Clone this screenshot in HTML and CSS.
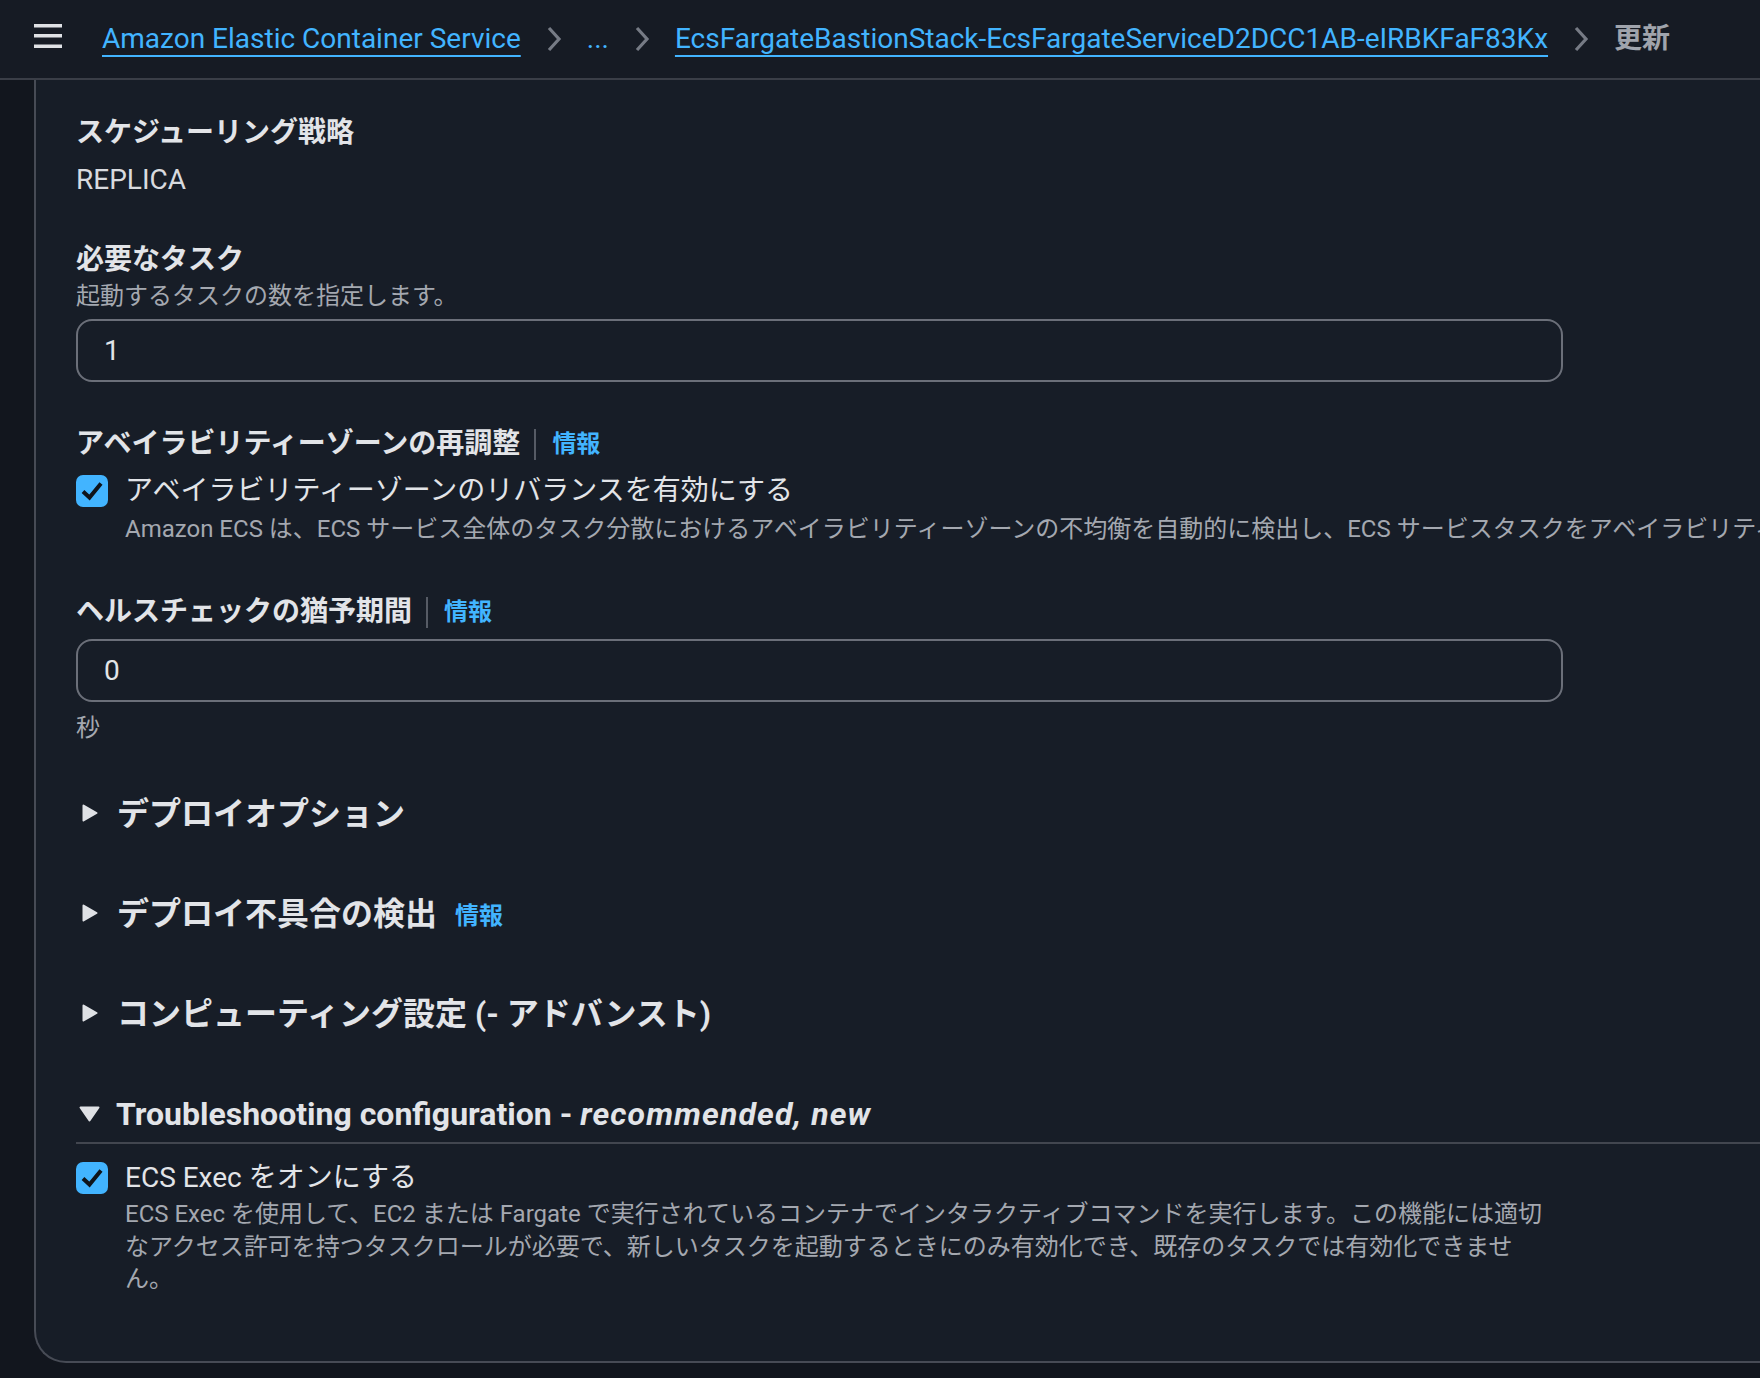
FILE: index.html
```html
<!DOCTYPE html>
<html lang="ja">
<head>
<meta charset="utf-8">
<title>更新</title>
<link rel="stylesheet" href="styles.css">
</head>
<body>
<header class="topbar">
  <span class="menu" aria-label="menu">
    <svg width="28" height="32" viewBox="0 0 28 32"><rect x="0" y="0" width="28" height="3.5" fill="#dfe1e5"/><rect x="0" y="10" width="28" height="3.5" fill="#dfe1e5"/><rect x="0" y="20.5" width="28" height="3.5" fill="#dfe1e5"/></svg>
  </span>
  <nav class="crumbs">
    <a class="crumb-link" href="#">Amazon Elastic Container Service</a>
    <span class="chev"><svg width="16" height="26" viewBox="0 0 16 26"><polyline points="3,2 13,13 3,24" fill="none" stroke="#767b85" stroke-width="3.2"/></svg></span>
    <a class="crumb-ellipsis" href="#">...</a>
    <span class="chev"><svg width="16" height="26" viewBox="0 0 16 26"><polyline points="3,2 13,13 3,24" fill="none" stroke="#767b85" stroke-width="3.2"/></svg></span>
    <a class="crumb-link" href="#">EcsFargateBastionStack-EcsFargateServiceD2DCC1AB-eIRBKFaF83Kx</a>
    <span class="chev"><svg width="16" height="26" viewBox="0 0 16 26"><polyline points="3,2 13,13 3,24" fill="none" stroke="#767b85" stroke-width="3.2"/></svg></span>
    <span class="crumb-current">更新</span>
  </nav>
</header>
<main class="page">
  <section class="card">
    <div class="field first">
      <div class="label">スケジューリング戦略</div>
      <div class="value">REPLICA</div>
    </div>

    <div class="field f-tasks">
      <div class="label">必要なタスク</div>
      <div class="desc desc-under">起動するタスクの数を指定します。</div>
      <div class="input">1</div>
    </div>

    <div class="field f-az">
      <div class="label">アベイラビリティーゾーンの再調整<span class="sep"></span><a class="info" href="#">情報</a></div>
      <div class="check-row">
        <span class="checkbox"><svg width="32" height="32" viewBox="0 0 32 32"><rect x="0" y="0" width="32" height="32" rx="7" fill="#42b4ff"/><polyline points="7,16.5 13.5,22.5 25,8.5" fill="none" stroke="#0f141a" stroke-width="4"/></svg></span>
        <span class="check-label">アベイラビリティーゾーンのリバランスを有効にする</span>
      </div>
      <div class="desc check-desc nowrap">Amazon ECS は、ECS サービス全体のタスク分散におけるアベイラビリティーゾーンの不均衡を自動的に検出し、ECS サービスタスクをアベイラビリティーゾーン間で再分散します。</div>
    </div>

    <div class="field f-hc">
      <div class="label">ヘルスチェックの猶予期間<span class="sep"></span><a class="info" href="#">情報</a></div>
      <div class="input">0</div>
      <div class="desc desc-after">秒</div>
    </div>

    <div class="expander ex-1">
      <svg class="caret-right" width="16" height="18" viewBox="0 0 16 18"><polygon points="1.5,1.5 14.5,9 1.5,16.5" fill="#dfe1e5" stroke="#dfe1e5" stroke-width="2" stroke-linejoin="round"/></svg>
      <span>デプロイオプション</span>
    </div>
    <div class="expander ex-2">
      <svg class="caret-right" width="16" height="18" viewBox="0 0 16 18"><polygon points="1.5,1.5 14.5,9 1.5,16.5" fill="#dfe1e5" stroke="#dfe1e5" stroke-width="2" stroke-linejoin="round"/></svg>
      <span>デプロイ不具合の検出</span><a class="info info-ex" href="#">情報</a>
    </div>
    <div class="expander ex-3">
      <svg class="caret-right" width="16" height="18" viewBox="0 0 16 18"><polygon points="1.5,1.5 14.5,9 1.5,16.5" fill="#dfe1e5" stroke="#dfe1e5" stroke-width="2" stroke-linejoin="round"/></svg>
      <span>コンピューティング設定 (- アドバンスト)</span>
    </div>

    <div class="expander ex-4">
      <svg class="caret-down" width="21" height="16" viewBox="0 0 21 16"><polygon points="1.5,1.5 19.5,1.5 10.5,14.5" fill="#dfe1e5" stroke="#dfe1e5" stroke-width="2" stroke-linejoin="round"/></svg>
      <span>Troubleshooting configuration - <em>recommended, new</em></span>
    </div>
    <div class="divider"></div>
    <div class="check-row ecs-row">
      <span class="checkbox"><svg width="32" height="32" viewBox="0 0 32 32"><rect x="0" y="0" width="32" height="32" rx="7" fill="#42b4ff"/><polyline points="7,16.5 13.5,22.5 25,8.5" fill="none" stroke="#0f141a" stroke-width="4"/></svg></span>
      <span class="check-label">ECS Exec をオンにする</span>
    </div>
    <div class="desc check-desc ecs-desc">ECS Exec を使用して、EC2 または Fargate で実行されているコンテナでインタラクティブコマンドを実行します。この機能には適切なアクセス許可を持つタスクロールが必要で、新しいタスクを起動するときにのみ有効化でき、既存のタスクでは有効化できません。</div>
  </section>
</main>
</body>
</html>
```
FILE: styles.css
```css
html, body {
  margin: 0;
  padding: 0;
}

body {
  background: #12161e;
  color: #d8dadf;
  font-family: Roboto, "Noto Sans CJK JP", sans-serif;
  height: 1378px;
  overflow: hidden;
}

a {
  color: #42b4ff;
}

/* top bar */
.topbar {
  height: 80px;
  box-sizing: border-box;
  border-bottom: 2px solid #3a3e47;
  background: #161b24;
  display: flex;
  align-items: center;
  padding-left: 34px;
}

.menu {
  display: flex;
  width: 28px;
  height: 32px;
  margin-top: 2px;
}

.crumbs {
  margin-left: 40px;
  display: flex;
  align-items: center;
  font-size: 28px;
  line-height: 40px;
  white-space: nowrap;
}

.crumb-link {
  color: #42b4ff;
  text-decoration: underline;
  text-decoration-thickness: 2px;
  text-underline-offset: 7px;
}

.crumb-ellipsis {
  color: #42b4ff;
  text-decoration: none;
}

.chev {
  display: flex;
  margin: 0 25px;
}

.crumb-current {
  color: #a0a4ac;
  font-weight: 700;
}

/* page + card */
.page {
  padding-left: 34px;
}

.card {
  width: 2200px;
  background: #171d27;
  border-left: 2px solid #474b55;
  border-bottom: 2px solid #474b55;
  border-bottom-left-radius: 32px;
  padding: 33px 0 65px 40px;
}

.label {
  display: flex;
  align-items: center;
  font-size: 28px;
  font-weight: 700;
  line-height: 40px;
  color: #e2e4e8;
}

.value {
  margin-top: 7px;
  font-size: 28px;
  line-height: 40px;
  color: #d8dadf;
}

.desc {
  font-size: 24px;
  line-height: 32px;
  color: #a4a8b0;
}

.nowrap {
  white-space: nowrap;
}

.field.f-tasks { margin-top: 40px; }
.field.f-az { margin-top: 42px; }
.field.f-hc { margin-top: 47px; }

.desc-under { margin-top: 0; }
.desc-after { margin-top: 10px; }

.input {
  width: 1487px;
  height: 63px;
  box-sizing: border-box;
  margin-top: 7px;
  border: 2px solid #6b6f79;
  border-radius: 16px;
  padding-left: 26px;
  display: flex;
  align-items: center;
  font-size: 28px;
  color: #e2e4e8;
}

.sep {
  width: 2px;
  height: 31px;
  background: #565b65;
  margin: 0 16px 0 14px;
}

.info {
  color: #42b4ff;
  font-size: 24px;
  font-weight: 700;
  text-decoration: none;
}

.check-row {
  display: flex;
  align-items: flex-start;
  gap: 17px;
  margin-top: 7px;
}

.checkbox {
  display: flex;
  width: 32px;
  height: 32px;
  margin-top: 4px;
}

.check-label {
  font-size: 28px;
  line-height: 40px;
  color: #e2e4e8;
}

.check-desc {
  margin-left: 49px;
  margin-top: 2px;
}

/* expandable sections */
.expander {
  display: flex;
  align-items: center;
  height: 44px;
  font-size: 32px;
  font-weight: 700;
  color: #e2e4e8;
  white-space: nowrap;
}

.expander em {
  font-style: italic;
  letter-spacing: 1.1px;
}

.ex-1 { margin-top: 45px; }
.ex-2 { margin-top: 56px; }
.ex-3 { margin-top: 56px; }
.ex-4 { margin-top: 59px; }

.caret-right {
  margin-left: 6px;
  margin-right: 19px;
  margin-top: 4px;
}

.caret-down {
  margin-left: 3px;
  margin-right: 16px;
}

.info-ex {
  margin-left: 18px;
  margin-top: 4px;
}

.divider {
  height: 2px;
  background: #42464f;
  margin-top: 6px;
}

.ecs-row {
  margin-top: 14px;
}

.ecs-desc {
  width: 1421px;
  margin-top: 0;
  line-height: 32.5px;
}
```
